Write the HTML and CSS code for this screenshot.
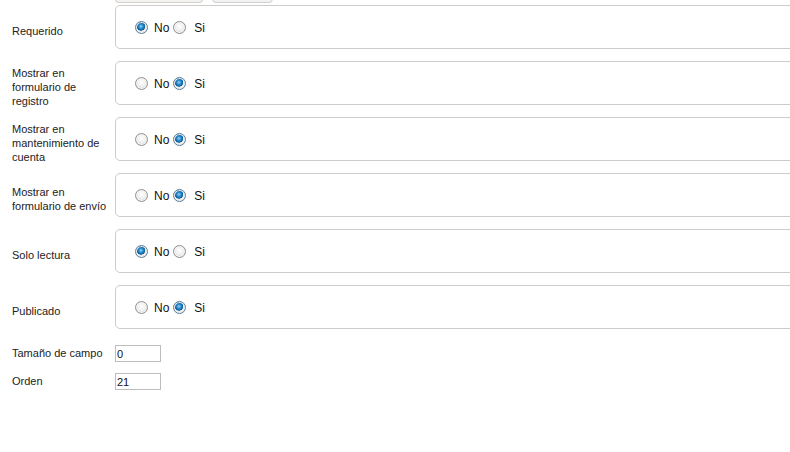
FILE: index.html
```html
<!DOCTYPE html>
<html>
<head>
<meta charset="utf-8">
<link rel="stylesheet" href="styles.css">
</head>
<body>
<div class="page">
  <div class="top-buttons">
    <span class="btn btn-a"></span>
    <span class="btn btn-b"></span>
  </div>
  <div class="form">
    <div class="row">
      <div class="label">Requerido</div>
      <div class="field"><fieldset class="radios">
        <input type="radio" name="r1" class="radio" checked><label class="rl rl-no">No</label><input type="radio" name="r1" class="radio"><label class="rl rl-si">Si</label>
      </fieldset></div>
    </div>
    <div class="row">
      <div class="label">Mostrar en formulario de registro</div>
      <div class="field"><fieldset class="radios">
        <input type="radio" name="r2" class="radio"><label class="rl rl-no">No</label><input type="radio" name="r2" class="radio" checked><label class="rl rl-si">Si</label>
      </fieldset></div>
    </div>
    <div class="row">
      <div class="label">Mostrar en mantenimiento de cuenta</div>
      <div class="field"><fieldset class="radios">
        <input type="radio" name="r3" class="radio"><label class="rl rl-no">No</label><input type="radio" name="r3" class="radio" checked><label class="rl rl-si">Si</label>
      </fieldset></div>
    </div>
    <div class="row">
      <div class="label">Mostrar en formulario de envío</div>
      <div class="field"><fieldset class="radios">
        <input type="radio" name="r4" class="radio"><label class="rl rl-no">No</label><input type="radio" name="r4" class="radio" checked><label class="rl rl-si">Si</label>
      </fieldset></div>
    </div>
    <div class="row">
      <div class="label">Solo lectura</div>
      <div class="field"><fieldset class="radios">
        <input type="radio" name="r5" class="radio" checked><label class="rl rl-no">No</label><input type="radio" name="r5" class="radio"><label class="rl rl-si">Si</label>
      </fieldset></div>
    </div>
    <div class="row">
      <div class="label">Publicado</div>
      <div class="field"><fieldset class="radios">
        <input type="radio" name="r6" class="radio"><label class="rl rl-no">No</label><input type="radio" name="r6" class="radio" checked><label class="rl rl-si">Si</label>
      </fieldset></div>
    </div>
    <div class="row small">
      <div class="label">Tamaño de campo</div>
      <div class="field"><input type="text" class="text" value="0"></div>
    </div>
    <div class="row small">
      <div class="label">Orden</div>
      <div class="field"><input type="text" class="text" value="21"></div>
    </div>
  </div>
</div>
</body>
</html>
```
FILE: styles.css
```css
html, body {
  margin: 0;
  padding: 0;
  background: #fff;
  overflow: hidden;
}
body {
  font-family: "Liberation Sans", Arial, sans-serif;
  color: #222;
  width: 790px;
  height: 452px;
}
.page {
  padding-left: 12px;
  width: 778px;
}
.top-buttons {
  display: flex;
  gap: 9px;
  margin-left: 103px;
  margin-top: -20px;
  height: 23px;
}
.btn {
  display: block;
  height: 21px;
  border: 1px solid #cfcfcf;
  border-radius: 4px;
  background: linear-gradient(#fff, #f2f2f2);
}
.btn-a { width: 86px; border-bottom-color: #d8cfc4; }
.btn-b { width: 59px; }
.form {
  display: flex;
  flex-direction: column;
  width: 778px;
  overflow: hidden;
}
.row {
  display: flex;
  align-items: center;
  height: 56px;
}
.row.small {
  height: 28px;
}
.label {
  flex: none;
  width: 95px;
  padding-right: 8px;
  font-size: 11px;
  line-height: 14px;
  color: #222;
}
.field {
  flex: none;
}
.radios {
  margin: -8px 0 0 0;
  box-sizing: border-box;
  width: 720px;
  height: 44px;
  border: 1px solid #cccccc;
  border-radius: 5px;
  padding: 0 0 0 19px;
  display: flex;
  align-items: center;
}
.radio {
  appearance: none;
  -webkit-appearance: none;
  box-sizing: border-box;
  width: 13px;
  height: 13px;
  margin: 1px 0 0 0;
  border-radius: 50%;
  border: 1px solid #8f8f8f;
  background: radial-gradient(circle at 50% 40%, #ffffff 0%, #f0f0f0 45%, #cfcfcf 100%);
  box-shadow: inset 0 0 0 1px #f4f4f4;
  flex: none;
}
.radio:checked {
  border-color: #5f7f99;
  background:
    radial-gradient(circle at 45% 40%, #9fd6f5 0px, #2a8fd0 2px, #0f5a96 4px, rgba(0,0,0,0) 4.5px),
    radial-gradient(circle at 50% 40%, #ffffff 0%, #eaeaea 60%, #c8c8c8 100%);
  box-shadow: inset 0 0 0 1px #e8eef2;
}
.rl {
  font-size: 12px;
  color: #111;
  line-height: 14px;
  margin-top: 2px;
}
.rl-no {
  margin-left: 6px;
  margin-right: 4px;
}
.rl-si {
  margin-left: 8px;
}
.text {
  box-sizing: border-box;
  width: 46px;
  height: 17px;
  margin: 0;
  padding: 0 1px;
  border: 1px solid #bdbdbd;
  font-family: "Liberation Sans", Arial, sans-serif;
  font-size: 11px;
  color: #111;
  background: #fff;
  outline: none;
}
```
